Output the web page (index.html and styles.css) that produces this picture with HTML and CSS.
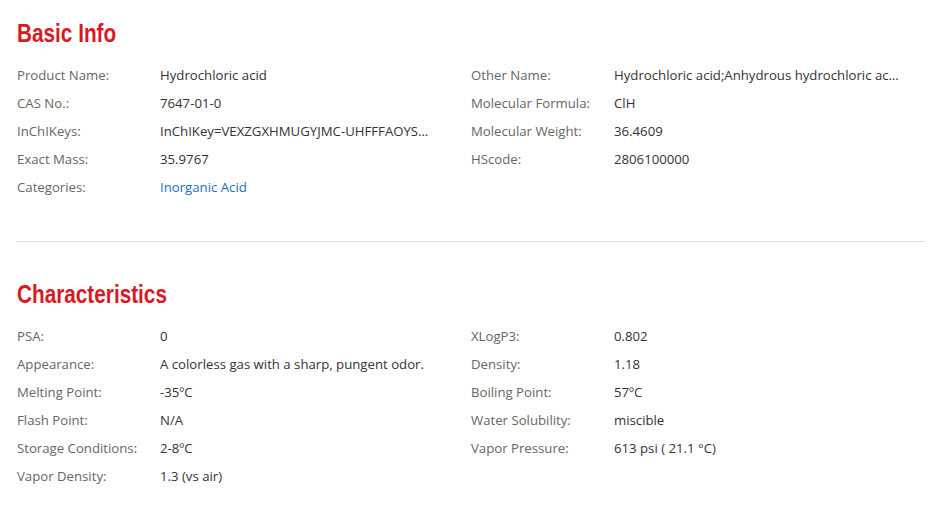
FILE: index.html
```html
<!DOCTYPE html>
<html lang="en">
<head>
<meta charset="utf-8">
<link rel="stylesheet" href="styles.css">
</head>
<body>
<div class="page">
  <section class="section">
    <h2 class="title">Basic Info</h2>
    <div class="grid">
      <div class="col">
        <div class="row"><span class="label">Product Name:</span><span class="value">Hydrochloric acid</span></div>
        <div class="row"><span class="label">CAS No.:</span><span class="value">7647-01-0</span></div>
        <div class="row"><span class="label">InChIKeys:</span><span class="value value-key">InChIKey=VEXZGXHMUGYJMC-UHFFFAOYSA-N</span></div>
        <div class="row"><span class="label">Exact Mass:</span><span class="value">35.9767</span></div>
        <div class="row"><span class="label">Categories:</span><span class="value"><a class="link" href="#">Inorganic Acid</a></span></div>
      </div>
      <div class="col">
        <div class="row"><span class="label">Other Name:</span><span class="value">Hydrochloric acid;Anhydrous hydrochloric acid;Hydrogen chloride</span></div>
        <div class="row"><span class="label">Molecular Formula:</span><span class="value">ClH</span></div>
        <div class="row"><span class="label">Molecular Weight:</span><span class="value">36.4609</span></div>
        <div class="row"><span class="label">HScode:</span><span class="value">2806100000</span></div>
      </div>
    </div>
  </section>
  <hr class="divider">
  <section class="section">
    <h2 class="title">Characteristics</h2>
    <div class="grid">
      <div class="col">
        <div class="row"><span class="label">PSA:</span><span class="value">0</span></div>
        <div class="row"><span class="label">Appearance:</span><span class="value">A colorless gas with a sharp, pungent odor.</span></div>
        <div class="row"><span class="label">Melting Point:</span><span class="value">-35ºC</span></div>
        <div class="row"><span class="label">Flash Point:</span><span class="value">N/A</span></div>
        <div class="row"><span class="label">Storage Conditions:</span><span class="value">2-8ºC</span></div>
        <div class="row"><span class="label">Vapor Density:</span><span class="value">1.3 (vs air)</span></div>
      </div>
      <div class="col">
        <div class="row"><span class="label">XLogP3:</span><span class="value">0.802</span></div>
        <div class="row"><span class="label">Density:</span><span class="value">1.18</span></div>
        <div class="row"><span class="label">Boiling Point:</span><span class="value">57ºC</span></div>
        <div class="row"><span class="label">Water Solubility:</span><span class="value">miscible</span></div>
        <div class="row"><span class="label">Vapor Pressure:</span><span class="value">613 psi ( 21.1 °C)</span></div>
      </div>
    </div>
  </section>
</div>
</body>
</html>
```
FILE: styles.css
```css
html, body {
  margin: 0;
  padding: 0;
  background: #fff;
}
body {
  font-family: "Open Sans", "Noto Sans", sans-serif;
  font-size: 13.2px;
  color: #333;
}
.page {
  padding: 14px 8px 0 17px;
}
.title {
  margin: 0 0 9px 0;
  font-family: "Liberation Sans", Arial, sans-serif;
  font-weight: bold;
  font-size: 25px;
  line-height: 38px;
  color: #d9191f;
  transform: scaleX(0.83);
  transform-origin: left center;
}
.grid {
  display: grid;
  grid-template-columns: 454px 454px;
}
.col {
  display: flex;
  flex-direction: column;
}
.row {
  display: flex;
  height: 28px;
  align-items: center;
}
.label {
  width: 143px;
  flex: none;
  color: #666;
}
.value {
  width: 287px;
  white-space: nowrap;
  overflow: hidden;
  text-overflow: ellipsis;
  color: #333;
}
.value-key {
  width: 276px;
}
.link {
  color: #1a6fc4;
  text-decoration: none;
}
.divider {
  border: 0;
  border-top: 1px solid #ddd;
  margin: 40px 0 33px 0;
}
```
